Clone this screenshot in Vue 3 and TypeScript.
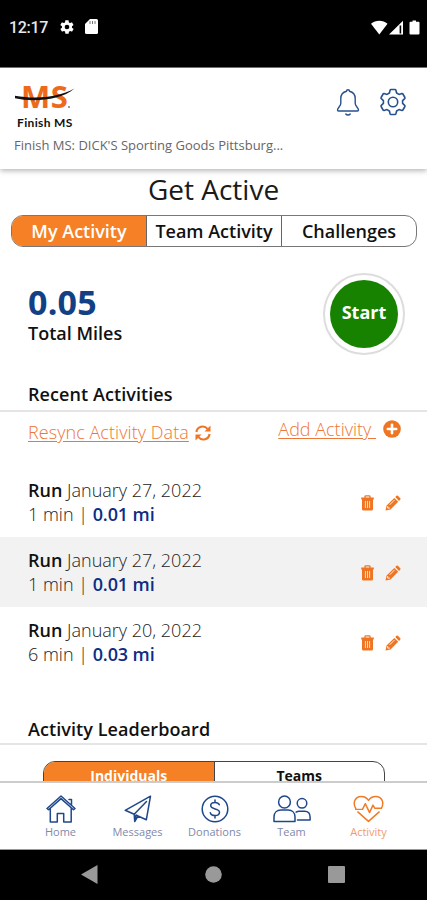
<script setup lang="ts">
import { ref } from 'vue'

interface Activity {
  id: number
  kind: string
  date: string
  duration: string
  distance: string
}

const tabs: string[] = ['My Activity', 'Team Activity', 'Challenges']
const activeTab = ref(0)
const boards: string[] = ['Individuals', 'Teams']
const activeBoard = ref(0)

const activities: Activity[] = [
  { id: 1, kind: 'Run', date: 'January 27, 2022', duration: '1 min', distance: '0.01 mi' },
  { id: 2, kind: 'Run', date: 'January 27, 2022', duration: '1 min', distance: '0.01 mi' },
  { id: 3, kind: 'Run', date: 'January 20, 2022', duration: '6 min', distance: '0.03 mi' },
]

const navItems: string[] = ['Home', 'Messages', 'Donations', 'Team', 'Activity']
const current = ref('Activity')
</script>

<template>
  <div class="phone">
    <div class="status">
      <span class="clock">12:17</span>
      <svg class="st-gear" width="16" height="16" viewBox="0 0 24 24"><path fill="#fff" d="M19.400 13c0-.3.1-.6.1-1s0-.7-.1-1l2.100-1.600c.2-.2.2-.4.1-.6l-2-3.500c-.1-.2-.4-.3-.6-.2l-2.500 1c-.5-.4-1.100-.7-1.700-1L14.400 2.400c0-.2-.2-.4-.5-.4h-4c-.2 0-.4.2-.5.400L9 5.100c-.6.2-1.200.6-1.700 1l-2.500-1c-.2-.1-.5 0-.6.2l-2 3.500c-.1.2-.1.5.1.6L4.500 11c0 .3-.1.6-.1 1s0 .7.1 1l-2.100 1.600c-.2.2-.2.4-.1.6l2 3.500c.1.2.4.3.6.2l2.500-1c.5.4 1.100.7 1.700 1l.4 2.700c0 .2.2.4.5.4h4c.2 0 .5-.2.5-.4l.4-2.700c.6-.2 1.200-.6 1.700-1l2.500 1c.2.1.5 0 .6-.2l2-3.500c.1-.2.1-.5-.1-.6zM12 15.500a3.500 3.500 0 1 1 0-7 3.500 3.500 0 0 1 0 7z" /></svg>
      <svg class="st-card" width="13" height="15" viewBox="0 0 13 15"><path fill="#fff" d="M5 0h6.500A1.500 1.500 0 0 1 13 1.500v12a1.500 1.500 0 0 1-1.500 1.500h-10A1.500 1.500 0 0 1 0 13.500V5z" /><path stroke="#777" stroke-width="1" d="M5 2v3M7.500 2v3M10 2v3" /></svg>
      <svg class="st-right" width="50" height="16" viewBox="0 0 50 16">
        <path fill="#fff" d="M0 3.800C4.500-.2 12-.2 16.500 3.800L8.300 14.500z" />
        <path fill="#fff" d="M18 14.500 32 .8v13.700z" />
        <path fill="#000" d="M28.600 5.500h1.600v8h-1.600z" />
        <path fill="#fff" d="M41.500.500h3.500v1.300h2.500q1 0 1 1v10.700q0 1-1 1h-8q-1 0-1-1V2.800q0-1 1-1h2z" />
      </svg>
    </div>

    <header class="header">
      <div class="brand">
        <div class="logo">
          <span class="logo-ms">MS</span>
          <svg class="swoosh" width="62" height="15" viewBox="0 0 62 15"><path fill="#111" d="M1 7.700C22 11.300 44 9.500 60.500.500 46 13 18 14 1 10.300z" /></svg>
          <span class="logo-dot"></span>
        </div>
        <div class="logo-name">Finish MS</div>
        <div class="event">Finish MS: DICK'S Sporting Goods Pittsburg...</div>
      </div>
      <div class="tools">
        <svg width="24" height="28" viewBox="0 0 24 28" fill="none" stroke="#27508f" stroke-width="1.400" stroke-linecap="round" stroke-linejoin="round"><path d="M10.500 3.300a1.500 1.500 0 0 1 3 0C17 4.200 19.200 7 19.200 10.500v5c0 2.700 3.300 4.100 3.300 6.500 0 .8-.4 1-1 1h-19c-.6 0-1-.2-1-1 0-2.400 3.300-3.800 3.300-6.500v-5c0-3.500 2.200-6.300 5.700-7.200zM9.800 26c1 1.300 3.400 1.300 4.400 0" /></svg>
        <svg width="28" height="28" viewBox="0 0 28 28" fill="none" stroke="#27508f" stroke-width="1.600" stroke-linejoin="round"><circle cx="14" cy="14" r="4.700" /><path d="M12 1.500h4q.7 0 .9.700l.7 2.800 2.400 1.400 2.900-.8q.7-.1 1 .4l2 3.500q.3.600-.2 1.100L23.600 12.600v2.800l2.100 2q.5.500.2 1.100l-2 3.500q-.3.500-1 .4L20 21.600 17.600 23l-.7 2.800q-.2.700-.9.700h-4q-.7 0-.9-.7L10.400 23 8 21.600l-2.900.8q-.7.100-1-.4l-2-3.500q-.3-.6.2-1.100l2.100-2v-2.800l-2.100-2q-.5-.5-.2-1.100l2-3.500q.3-.5 1-.4L8 6.400 10.400 5l.7-2.800q.2-.7.900-.7z" /></svg>
      </div>
    </header>

    <main class="content">
      <h1 class="title">Get Active</h1>
      <div class="tabs">
        <button v-for="(tab, i) in tabs" :key="tab" class="tab" :class="{ on: i === activeTab }" @click="activeTab = i">{{ tab }}</button>
      </div>

      <section class="summary">
        <div>
          <div class="miles">0.05</div>
          <div class="miles-label">Total Miles</div>
        </div>
        <button class="start"><span>Start</span></button>
      </section>

      <h2 class="heading">Recent Activities</h2>

      <div class="links">
        <div class="link-group">
          <a class="link resync">Resync Activity Data</a>
          <svg class="sync" width="16" height="16" viewBox="0 0 16 16" fill="none" stroke="#ef7522" stroke-width="2.100"><path d="M1.400 7A6.300 6.300 0 0 1 12.500 3.800M14.600 9A6.300 6.300 0 0 1 3.500 12.200" /><path fill="#ef7522" stroke="none" d="M15.500.500v6h-6zM.5 15.500v-6h6z" /></svg>
        </div>
        <div class="link-group">
          <a class="link add-link">Add Activity&nbsp;</a>
          <svg class="plus" width="18" height="18" viewBox="0 0 18 18"><circle cx="9" cy="9" r="8.800" fill="#ef7522" /><path stroke="#fff" stroke-width="2.600" stroke-linecap="round" d="M9 4.800v8.400M4.800 9h8.400" /></svg>
        </div>
      </div>

      <ul class="list">
        <li v-for="(a, i) in activities" :key="a.id" class="row" :class="{ shade: i % 2 === 1 }">
          <div>
            <div class="line"><b>{{ a.kind }}</b> {{ a.date }}</div>
            <div class="line">{{ a.duration }} | <b class="dist">{{ a.distance }}</b></div>
          </div>
          <div class="row-icons">
            <svg width="13" height="16" viewBox="0 0 13 16"><path fill="none" stroke="#ef7522" stroke-width="1.300" d="M4 3V1.600q0-.8.800-.8h3.400q.8 0 .8.800V3" /><path fill="#ef7522" d="M.2 2.600h12.600v1.800H12v9.800q0 1.400-1.400 1.400H2.400Q1 15.600 1 14.200V4.400H.2z" /><path stroke="#fbd9c1" stroke-width="1" d="M4.400 6v7M6.500 6v7M8.600 6v7" /></svg>
            <svg width="16" height="16" viewBox="0 0 16 16"><path fill="#ef7522" d="M.5 15.500 1.600 10.600 9.300 2.900l3.900 3.900-7.700 7.700zM10.200 2 11.500.800q.7-.6 1.400 0l2.400 2.400q.6.700 0 1.400L14.100 5.900z" /><path fill="none" stroke="#fff" stroke-width=".9" d="M2.700 11.100v2h2.100M4.700 9.800l4.700-4.700" /></svg>
          </div>
        </li>
      </ul>

      <h2 class="heading board-heading">Activity Leaderboard</h2>
      <div class="boards">
        <button v-for="(b, i) in boards" :key="b" class="board" :class="{ on: i === activeBoard }" @click="activeBoard = i">{{ b }}</button>
      </div>
    </main>

    <nav class="nav">
      <a v-for="item in navItems" :key="item" class="nav-item" :class="{ current: item === current }" @click="current = item">
        <svg v-if="item === 'Home'" class="ico" width="30" height="28" viewBox="0 0 30 28"><path d="M1 13.500 15 1l14 12.500-1.500 1.300L15 3.600 2.500 14.800zM4.300 13.300V27h7v-8.500h6.400V27h7.500V13.300M23 4.500h2.500v5.300" /></svg>
        <svg v-else-if="item === 'Messages'" class="ico" width="28" height="28" viewBox="0 0 28 28"><path d="M1.200 15.300 26.500 1.200 22.300 24.800 14 21l-3.300 5.500-.5-7.300zM10.200 19.200 22.500 6.500M14 21 12 20l-1.300 6.500M1.200 15.300l9 3.900" /></svg>
        <svg v-else-if="item === 'Donations'" class="ico" width="28" height="28" viewBox="0 0 28 28"><circle cx="14" cy="14" r="12.800" /><path d="M18.300 9.800C17.600 8.200 16 7.500 14 7.500c-2.500 0-4.300 1.200-4.300 3.100 0 4.400 8.800 2.200 8.800 6.600 0 2-1.800 3.300-4.500 3.300-2.300 0-4.200-.9-4.700-2.800M14 5v2.500M14 20.500V23" /></svg>
        <svg v-else-if="item === 'Team'" class="ico" width="38" height="28" viewBox="0 0 38 28"><circle cx="11.500" cy="7" r="5.900" /><path d="M1 26.600v-4.500c0-4.800 3.300-7 6.800-7h7.400c3.500 0 6.800 2.200 6.800 7v4.500zM24.500 25h12.600v-2.800c0-4-2.500-6-5.500-6h-5.200c-1.300 0-2.300.2-3.300.9" /><circle cx="29" cy="8.300" r="4.800" /></svg>
        <svg v-else class="ico" width="31" height="28" viewBox="0 0 32 28"><path d="M2.800 13.300C-.8 7.300 2.500 1 8.500 1c3.300 0 6 1.500 7.500 4 1.500-2.500 4.200-4 7.500-4 6 0 9.300 6.300 5.700 12.300h-6.600l-2-3.300-3.500 7.700-4.400-9.200-2.900 5.900H2.800M5 17l11 9.800L27 17" /></svg>
        <span class="nav-label">{{ item }}</span>
      </a>
    </nav>

    <div class="system">
      <svg width="17" height="19" viewBox="0 0 17 19"><path fill="#999" d="M0 9.500 16.500 0v19z" /></svg>
      <svg width="17" height="17" viewBox="0 0 17 17"><circle cx="8.500" cy="8.500" r="8.300" fill="#999" /></svg>
      <svg width="17" height="17" viewBox="0 0 17 17"><rect width="17" height="17" rx="1" fill="#999" /></svg>
    </div>
  </div>
</template>

<style>
body { background: #fff; }
</style>

<style scoped>
* { box-sizing: border-box; }
.phone { width: 427px; height: 900px; display: flex; flex-direction: column; overflow: hidden; background: #fff; color: #111; font-family: "Open Sans", sans-serif; }
button { font-family: inherit; margin: 0; padding: 0; border: 0; background: none; color: inherit; }
svg { display: block; flex: none; }

.status { height: 68px; flex: none; background: #000; display: flex; align-items: flex-start; padding: 19px 2px 0 9px; border-bottom: 1px solid #777; }
.clock { width: 39px; color: #e8e8e8; font: 500 16px/18px Roboto, sans-serif; letter-spacing: -.3px; white-space: nowrap; }
.st-gear { margin: 0 0 0 11px; }
.st-card { margin-left: 10px; }
.st-right { margin: 1px 4px 0 auto; }

.header { position: relative; z-index: 1; height: 101px; flex: none; background: #fff; box-shadow: 0 2px 5px rgba(0, 0, 0, .28); display: flex; justify-content: space-between; padding: 0 20px 0 14px; }
.logo { position: relative; height: 46px; padding-left: 7px; }
.logo-ms { display: block; padding-top: 13px; font: 700 31px/30px "Open Sans", sans-serif; color: #ee6a1b; letter-spacing: .4px; }
.swoosh { position: absolute; left: 0; top: 20px; }
.logo-dot { position: absolute; left: 54px; top: 38px; width: 2px; height: 2px; background: #999; }
.logo-name { margin-left: 3px; font: 700 12px/18px Lato, sans-serif; letter-spacing: .35px; color: #111; }
.event { margin-top: 4px; font-size: 13px; line-height: 18px; white-space: nowrap; color: #666; }
.tools { display: flex; gap: 19px; padding-top: 20px; }

.content { height: 612px; flex: none; overflow: hidden; display: flex; flex-direction: column; }
.title { margin: 3px 0 0; height: 36px; text-align: center; font-size: 28px; line-height: 34px; font-weight: 400; color: #1a1a1a; }
.tabs { display: flex; flex: none; height: 32px; margin: 8px 10px 0 11px; border: 1px solid #777; border-radius: 12px; overflow: hidden; position: relative; top: 1px; }
.tab { flex: 1; font-size: 18px; line-height: 31px; font-weight: 600; white-space: nowrap; }
.tab + .tab { border-left: 1px solid #666; }
.tab.on, .board.on { background: #f58025; color: #fff; }

.summary { display: flex; justify-content: space-between; flex: none; height: 108px; margin-top: 26px; padding: 0 22px 0 28px; }
.miles { margin-top: 8px; font-size: 34px; line-height: 44px; font-weight: 700; color: #124085; letter-spacing: .2px; }
.miles-label { font-size: 18px; line-height: 20px; font-weight: 600; margin-top: -1px; }
.start { width: 82px; height: 82px; margin-top: 1px; border: 2px solid #ddd; border-radius: 50%; padding: 5px; }
.start span { display: block; width: 68px; height: 68px; border-radius: 50%; background: #168200; color: #fff; font-size: 18px; line-height: 65px; font-weight: 700; }

.heading { flex: none; margin: 0; height: 32px; border-bottom: 2px solid #e5e5e5; padding-left: 28px; font-size: 18px; line-height: 28px; font-weight: 600; letter-spacing: .08px; }
.links { display: flex; justify-content: space-between; flex: none; height: 55px; padding: 7px 26px 0 28px; }
.link-group { display: flex; align-items: flex-start; }
.link { font-size: 18px; line-height: 26px; font-weight: 300; color: #ee7638; text-decoration: underline; text-underline-offset: 2px; white-space: nowrap; }
.resync { letter-spacing: .06px; }
.sync { margin: 6px 0 0 6px; }
.add-link { margin-top: -3px; }
.plus { margin: 1px 0 0 7px; }

.list { list-style: none; margin: 0; padding: 0; flex: none; }
.row { display: flex; justify-content: space-between; height: 70px; padding: 11px 26px 0 28px; }
.row.shade { background: #f2f2f2; }
.line { font-size: 18px; line-height: 24px; font-weight: 300; color: #222; white-space: nowrap; }
.line b { font-weight: 600; color: #111; }
.line .dist { color: #0d2d85; letter-spacing: -.1px; }
.row-icons { display: flex; gap: 11px; padding-top: 17px; }
.board-heading { margin-top: 36px; line-height: 32px; }
.boards { display: flex; flex: none; height: 30px; margin: 16px 42px 0 43px; border: 1px solid #444; border-radius: 12px 12px 0 0; overflow: hidden; }
.board { flex: 1; font-size: 14px; line-height: 28px; font-weight: 700; }
.board + .board { border-left: 1px solid #444; }

.nav { height: 69px; flex: none; display: flex; padding: 12px 20px 0 22px; background: #fff; border-top: 2px solid #ccc; border-bottom: 1px solid #999; }
.nav-item { flex: 1; display: flex; flex-direction: column; align-items: center; color: #8189aa; }
.ico { fill: none; stroke: #1e488b; stroke-width: 1.500; stroke-linejoin: round; stroke-linecap: round; }
.nav-label { margin-top: 1px; font-size: 11px; line-height: 16px; }
.current { color: #f49a6c; }
.current .ico { stroke: #f27a24; }
.system { flex: 1; background: #000; display: flex; align-items: center; justify-content: space-between; padding: 0 82px 1px 81px; }
</style>
